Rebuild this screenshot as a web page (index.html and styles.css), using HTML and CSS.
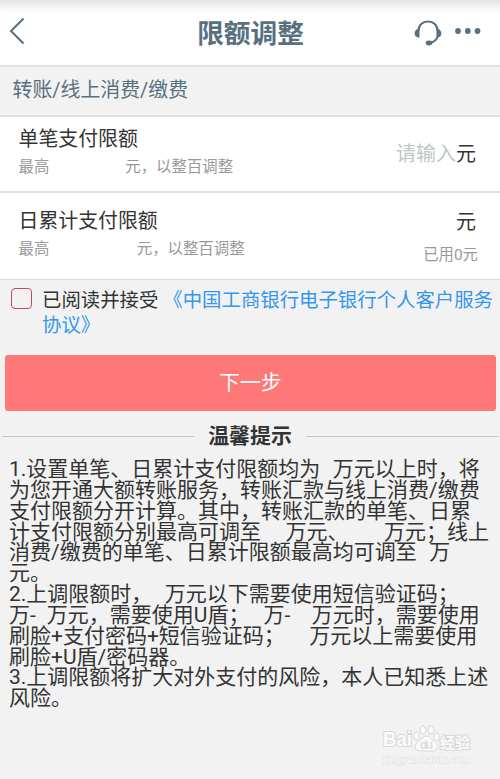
FILE: index.html
```html
<!DOCTYPE html>
<html lang="zh-CN">
<head>
    <meta charset="UTF-8">
    <meta name="viewport" content="width=device-width, initial-scale=1.0">
    <title>限额调整</title>
    <link rel="stylesheet" href="styles.css">
</head>
<body>
    <header class="topbar">
        <svg class="back" width="16" height="28" viewBox="0 0 16 28"><path d="M14.500 1.500 2 14l12.500 12.500"/></svg>
        <h1>限额调整</h1>
        <div class="actions">
            <svg class="headset" width="28" height="26" viewBox="0 0 28 26">
                <path class="line" d="M4.500 11C4.500 5 8.500 1.500 14 1.500S23.500 5 23.500 11M24 15C23 20 20 22.500 15 23"/>
                <path d="M5.500 9v8.500H4.200C2 17.300.6 15.500.6 13.200S2 9.500 4 9zM22.500 9v8.500h1.300c2.200-.2 3.600-2 3.600-4.300S26 9.500 24 9z"/>
                <ellipse cx="15" cy="23" rx="3.300" ry="2.400"/>
            </svg>
            <svg class="more" width="26" height="6" viewBox="0 0 26 6">
                <circle cx="3" cy="3" r="2.900"/><circle cx="12.800" cy="3" r="2.900"/><circle cx="22.500" cy="3" r="2.900"/>
            </svg>
        </div>
    </header>

    <main>
        <h2 class="section">转账/线上消费/缴费</h2>

        <div class="row single">
            <div class="label">
                <p class="name">单笔支付限额</p>
                <p class="hint">最高<span class="gap g76"></span>元，以整百调整</p>
            </div>
            <div class="value"><span class="placeholder">请输入</span><span>元</span></div>
        </div>
        <div class="row daily">
            <div class="label">
                <p class="name">日累计支付限额</p>
                <p class="hint">最高<span class="gap g88"></span>元，以整百调整</p>
            </div>
            <div class="value">
                <span>元</span>
                <span class="used">已用0元</span>
            </div>
        </div>

        <div class="agree">
            <span class="checkbox"></span>
            <p>已阅读并接受<a class="link"><span class="open">《</span>中国工商银行电子银行个人客户服务<br>协议》</a></p>
        </div>

        <button class="next" type="button">下一步</button>

        <h3 class="tips-title"><span>温馨提示</span></h3>
        <div class="tips">
            <p>1.设置单笔、日累计支付限额均为<span class="gap g13"></span>万元以上时，将<br>
            为您开通大额转账服务，转账汇款与线上消费/缴费<br>
            支付限额分开计算。其中，转账汇款的单笔、日累<br>
            计支付限额分别最高可调至<span class="gap g25"></span>万元、<span class="gap g36"></span>万元；线上<br>
            消费/缴费的单笔、日累计限额最高均可调至<span class="gap g13"></span>万<br>
            元。</p>
            <p>2.上调限额时，<span class="gap g13"></span>万元以下需要使用短信验证码；<br>
            万-<span class="gap g12"></span>万元，需要使用U盾；<span class="gap g14"></span>万-<span class="gap g22"></span>万元时，需要使用<br>
            刷脸+支付密码+短信验证码；<span class="gap g25"></span>万元以上需要使用<br>
            刷脸+U盾/密码器。</p>
            <p>3.上调限额将扩大对外支付的风险，本人已知悉上述<br>
            风险。</p>
        </div>
    </main>

    <svg class="watermark" width="92" height="46" viewBox="0 0 92 46">
        <text x="1" y="21" font-size="20" textLength="29" lengthAdjust="spacingAndGlyphs">Bai</text>
        <ellipse cx="34.500" cy="11" rx="2.800" ry="3.800"/>
        <ellipse cx="41" cy="5" rx="3" ry="4"/>
        <ellipse cx="49" cy="5" rx="3" ry="4"/>
        <ellipse cx="54.500" cy="12" rx="2.800" ry="3.800"/>
        <path d="M44.500 11c3 0 4.500 3 7 5 3 2.500 4.500 4.500 3.500 7-1 3-4 3.500-10.500 3S35 26.500 33.500 23.500c-1-2.500.5-5 3.500-7.500 3-2 4.500-5 7.500-5z"/>
        <text class="du" x="38" y="24" font-size="12" textLength="13">du</text>
        <text class="cn" x="58" y="23" font-size="15" textLength="30">经验</text>
        <text class="site" x="1" y="38" font-size="10" textLength="87" lengthAdjust="spacingAndGlyphs">jingyan.baidu.com</text>
    </svg>
</body>
</html>
```
FILE: styles.css
```css
* {
    box-sizing: border-box;
}
body {
    position: relative;
    margin: 0;
    height: 779px;
    overflow: hidden;
    background: #f2f2f2;
    color: #333;
    font-family: Roboto, "Noto Sans CJK SC", sans-serif;
    font-weight: 400;
}
h1, h2, h3, p {
    margin: 0;
}
.gap {
    display: inline-block;
}
.g12 { width: 11px; }
.g13 { width: 12.5px; }
.g14 { width: 14px; }
.g22 { width: 21.5px; }
.g25 { width: 24.5px; }
.g36 { width: 35.5px; }
.g76 { width: 76px; }
.g88 { width: 87.5px; }

/* Header */
.topbar {
    display: grid;
    grid-template-columns: 90px 1fr 90px;
    align-items: center;
    height: 67px;
    padding: 0 9px;
    background: linear-gradient(#e4e4e4, #fafafa 10px, #fff 16px);
    border-bottom: 2px solid #d9e3e3;
    color: #587080;
}
.topbar h1 {
    padding: 2px 0 0 1px;
    font-size: 26.7px;
    line-height: 40px;
    font-weight: 700;
    text-align: center;
}
.back {
    fill: none;
    stroke: #587080;
    stroke-width: 2;
    margin-top: -3px;
}
.actions {
    display: flex;
    align-items: center;
    justify-content: flex-end;
    gap: 13px;
    margin: -3px 10px 0 0;
}
.actions svg {
    fill: #587080;
}
.headset {
    margin-top: 3px;
}
.actions .line {
    fill: none;
    stroke: #587080;
    stroke-width: 2;
}
.section {
    height: 48px;
    padding-left: 12.5px;
    font-size: 19.9px;
    font-weight: 400;
    line-height: 48px;
    color: #587080;
}

/* Limit rows */
.row {
    display: flex;
    justify-content: space-between;
    padding: 0 24px 0 18.5px;
    background: #fff;
    border-top: 2px solid #e1e1e1;
}
.single {
    height: 76px;
    padding-top: 8px;
}
.daily {
    height: 89px;
    padding-top: 14px;
    border-bottom: 1px solid #dadada;
}
.name {
    font-size: 19.9px;
    line-height: 30px;
}
.hint {
    font-size: 15.4px;
    line-height: 25px;
    color: #999;
}
.value {
    font-size: 20px;
    line-height: 30px;
}
.single .value {
    padding-top: 14px;
}
.daily .value {
    display: flex;
    flex-direction: column;
    align-items: flex-end;
}
.placeholder {
    color: #bdc8c5;
}
.used {
    margin: 5px -2px 0 0;
    font-size: 15.4px;
    line-height: 26px;
    color: #999;
}

/* Agreement */
.agree {
    display: flex;
    gap: 10px;
    height: 75px;
    padding: 8px 0 0 11px;
    font-size: 19.4px;
    line-height: 25px;
    white-space: nowrap;
}
.checkbox {
    flex: none;
    width: 21px;
    height: 21px;
    margin-top: 0;
    border: 1.5px solid #c94b5b;
    border-radius: 4px;
}
.link {
    color: #3596ee;
}
.open {
    margin-left: 5px;
}
.next {
    display: block;
    width: 491.5px;
    height: 56px;
    margin: 0 0 0 4.5px;
    padding: 0 0 4px;
    border: none;
    border-radius: 3px;
    background: #ff7878;
    color: #fff;
    font-family: inherit;
    font-size: 20.8px;
}

/* Tips */
.tips-title {
    display: flex;
    align-items: center;
    gap: 14px;
    height: 47px;
    padding: 3px 2px 0;
    font-size: 20.9px;
    line-height: 30px;
}
.tips-title::before,
.tips-title::after {
    content: "";
    flex: 1;
    height: 1px;
    background: #c6c6c6;
}
.tips {
    padding: 1px 0 0 9px;
    font-size: 21px;
    line-height: 20.85px;
    white-space: nowrap;
}

/* Watermark over the page corner */
.watermark {
    position: absolute;
    left: 382px;
    top: 725px;
    fill: #fbfbfb;
    stroke: #d8d8d8;
    stroke-width: 1;
    font-family: "Liberation Sans", "Noto Sans CJK SC", sans-serif;
    font-weight: 700;
}
.watermark text {
    paint-order: stroke;
    stroke-width: 2;
}
.watermark .du {
    fill: #dcdcdc;
    stroke: none;
}
.watermark .site {
    font-family: "Liberation Serif", serif;
    fill: #f7f7f7;
    stroke: #dfdfdf;
    stroke-width: 1;
}
```
